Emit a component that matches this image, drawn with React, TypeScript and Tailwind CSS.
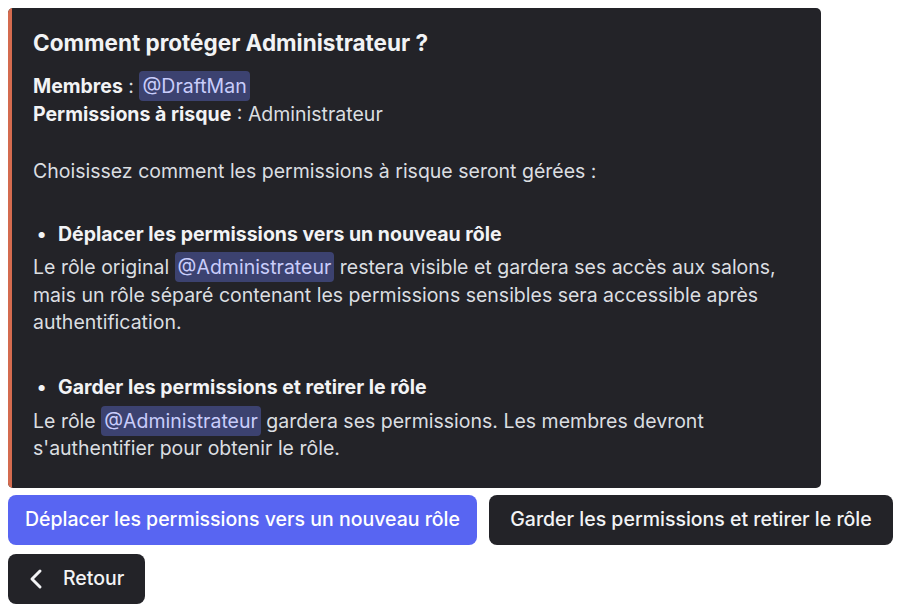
import React from "react";

const Mention = ({ children }: { children: React.ReactNode }) => (
  <span className="rounded-[4px] bg-[#3c4270] px-[3px] py-[3px] text-[#c9cdfb]">{children}</span>
);

export default function App() {
  return (
    <div
      className="min-h-[612px] w-[901px] bg-white p-[8px]"
      style={{ fontFamily: 'Inter, "Noto Sans", sans-serif' }}
    >
      <div className="flex w-[813px] overflow-hidden rounded-[5px] bg-[#232328]">
        <div className="w-[4px] shrink-0 bg-[#d46b4f]" />
        <div className="flex-1 pl-[21px] pr-[16px] pt-[20px] pb-[25px] text-[19.5px] leading-[27.5px] text-[#dbdee1] whitespace-nowrap">
          <div className="text-[22.5px] font-bold leading-[30px] text-[#f2f3f5]">Comment protéger Administrateur ?</div>
          <div className="mt-[15px]">
            <span className="font-bold text-[#f2f3f5]">Membres</span> : <Mention>@DraftMan</Mention>
          </div>
          <div>
            <span className="font-bold text-[#f2f3f5]">Permissions à risque</span> : Administrateur
          </div>
          <div className="h-[29.5px]" />
          <div>Choisissez comment les permissions à risque seront gérées :</div>
          <div className="h-[27.5px]" />
          <ul className="mt-[8px] mb-[6px] pl-[25px]">
            <li className="relative font-bold text-[#f2f3f5]">
              <span className="absolute left-[-21px] top-0">•</span>
              Déplacer les permissions vers un nouveau rôle
            </li>
          </ul>
          <div>
            Le rôle original <Mention>@Administrateur</Mention> restera visible et gardera ses accès aux salons,
          </div>
          <div>mais un rôle séparé contenant les permissions sensibles sera accessible après</div>
          <div>authentification.</div>
          <div className="h-[29.5px]" />
          <ul className="mt-[8px] mb-[6px] pl-[25px]">
            <li className="relative font-bold text-[#f2f3f5]">
              <span className="absolute left-[-21px] top-0">•</span>
              Garder les permissions et retirer le rôle
            </li>
          </ul>
          <div>
            Le rôle <Mention>@Administrateur</Mention> gardera ses permissions. Les membres devront
          </div>
          <div>s'authentifier pour obtenir le rôle.</div>
        </div>
      </div>
      <div className="mt-[7px] flex gap-[12px]">
        <button className="h-[50px] w-[469px] rounded-[8px] bg-[#5865f2] text-[19.5px] font-medium text-white">
          Déplacer les permissions vers un nouveau rôle
        </button>
        <button className="h-[50px] w-[404px] rounded-[8px] bg-[#232328] text-[19.5px] font-medium text-[#f2f3f5]">
          Garder les permissions et retirer le rôle
        </button>
      </div>
      <div className="mt-[9px] flex">
        <button className="flex h-[50px] w-[137px] items-center rounded-[8px] bg-[#232328] pl-[20px] text-[19.5px] font-medium text-[#f2f3f5]">
          <svg width="16" height="22" viewBox="0 0 16 22" fill="none">
            <path d="M12 3 L4 11 L12 19" stroke="#f2f3f5" strokeWidth="3" strokeLinecap="round" strokeLinejoin="round" />
          </svg>
          <span className="ml-[19px]">Retour</span>
        </button>
      </div>
    </div>
  );
}
